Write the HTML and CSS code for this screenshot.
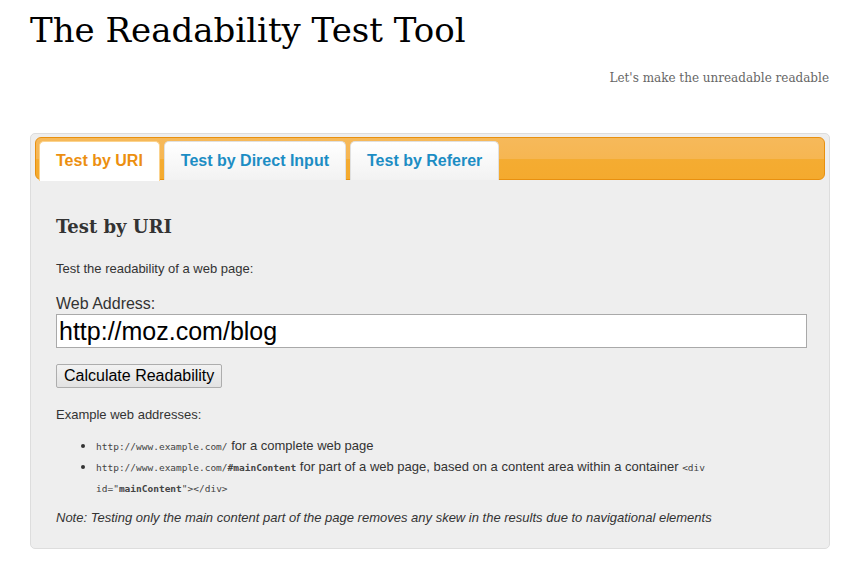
FILE: index.html
```html
<!DOCTYPE html>
<html lang="en">
<head>
    <meta charset="UTF-8">
    <title>The Readability Test Tool</title>
    <link rel="stylesheet" href="styles.css">
</head>
<body>
    <div class="container">
        <h1 class="site-title">The Readability Test Tool</h1>
        <p class="tagline">Let's make the unreadable readable</p>

        <div class="tabs">
            <ul class="tab-nav">
                <li class="tab active"><a href="#uri">Test by URI</a></li>
                <li class="tab"><a href="#input">Test by Direct Input</a></li>
                <li class="tab"><a href="#referer">Test by Referer</a></li>
            </ul>
            <div class="tab-panel" id="uri">
                <h2>Test by URI</h2>
                <p class="intro">Test the readability of a web page:</p>
                <form class="uri-form">
                    <label for="uri-field">Web Address:</label>
                    <input type="text" id="uri-field" name="uri" value="http://moz.com/blog">
                    <input type="submit" value="Calculate Readability">
                </form>
                <p class="small">Example web addresses:</p>
                <ul class="examples">
                    <li><code>http://www.example.com/</code> for a complete web page</li>
                    <li><code>http://www.example.com/<span class="hl">#mainContent</span></code> for part of a web page, based on a content area within a container <code>&lt;div id="<span class="hl">mainContent</span>"&gt;&lt;/div&gt;</code></li>
                </ul>
                <p class="note">Note: Testing only the main content part of the page removes any skew in the results due to navigational elements</p>
            </div>
        </div>
    </div>
</body>
</html>
```

FILE: styles.css
```css
body {
    margin: 0;
    padding: 0;
    background-color: #fff;
    font-family: Arial, "Liberation Sans", sans-serif;
    color: #333;
}

.container {
    width: 800px;
    margin-left: 30px;
}

.site-title {
    font-family: "DejaVu Serif", serif;
    font-weight: normal;
    font-size: 34px;
    color: #000;
    margin: 0;
    padding-top: 10px;
    line-height: 40px;
}

.tagline {
    font-family: "DejaVu Serif", serif;
    font-size: 12px;
    color: #666;
    text-align: right;
    margin: 20px 1px 0 0;
    line-height: 16px;
}

.tabs {
    margin-top: 47px;
    border: 1px solid #ddd;
    border-radius: 5px;
    background-color: #eee;
    padding: 3px 4px;
}

.tab-nav {
    list-style: none;
    margin: 0;
    padding: 3px 2px 0 3px;
    display: flex;
    gap: 4px;
    height: 38px;
    border: 1px solid #e8900f;
    border-radius: 6px;
    background: linear-gradient(to bottom, #f6b95a 0%, #f6b652 50%, #f4ac32 51%, #f4aa2e 100%);
}

.tab {
    border: 1px solid #e0e0e0;
    border-bottom: none;
    border-radius: 5px 5px 0 0;
    background: linear-gradient(to bottom, #fff, #f2f2f2);
    height: 38px;
}

.tab a {
    display: block;
    padding: 0 16px;
    line-height: 37px;
    font-size: 16px;
    font-weight: bold;
    color: #1c8dc4;
    text-decoration: none;
}

.tab.active {
    background: #fff;
    border-color: #fbd38e;
    height: 39px;
}

.tab.active a {
    color: #ec8f10;
}

.tab-panel {
    padding: 0 20px 19px 21px;
}

.tab-panel h2 {
    font-family: "DejaVu Serif", serif;
    font-size: 18px;
    color: #333;
    margin: 36px 0 0 0;
    line-height: 22px;
}

.intro, .small, .note {
    font-size: 13px;
    line-height: 16px;
}

.intro {
    margin: 23px 0 0 0;
}

.uri-form label {
    display: block;
    font-size: 16px;
    line-height: 18px;
    margin-top: 18px;
}

.uri-form input[type="text"] {
    display: block;
    width: 751px;
    height: 34px;
    box-sizing: border-box;
    border: 1px solid #a9a9a9;
    padding: 0 2px;
    font-family: Arial, "Liberation Sans", sans-serif;
    font-size: 25px;
    color: #000;
    margin-top: 1px;
}

.uri-form input[type="submit"] {
    display: block;
    margin-top: 16px;
    height: 24px;
    padding: 0 7px;
    font-family: Arial, "Liberation Sans", sans-serif;
    font-size: 16px;
    color: #000;
    border: 1px solid #adadad;
    border-radius: 2px;
    background: linear-gradient(to bottom, #f2f2f2, #e2e2e2);
}

.small {
    margin: 19px 0 0 0;
}

.examples {
    margin: 12px 0 0 0;
    padding-left: 40px;
    font-size: 13px;
    line-height: 21px;
}

.examples code {
    font-family: "DejaVu Sans Mono", monospace;
    font-size: 9.5px;
    line-height: 1;
    color: #444;
}

.examples .hl {
    font-weight: bold;
}

.note {
    font-style: italic;
    margin: 12px 0 0 0;
}
```
